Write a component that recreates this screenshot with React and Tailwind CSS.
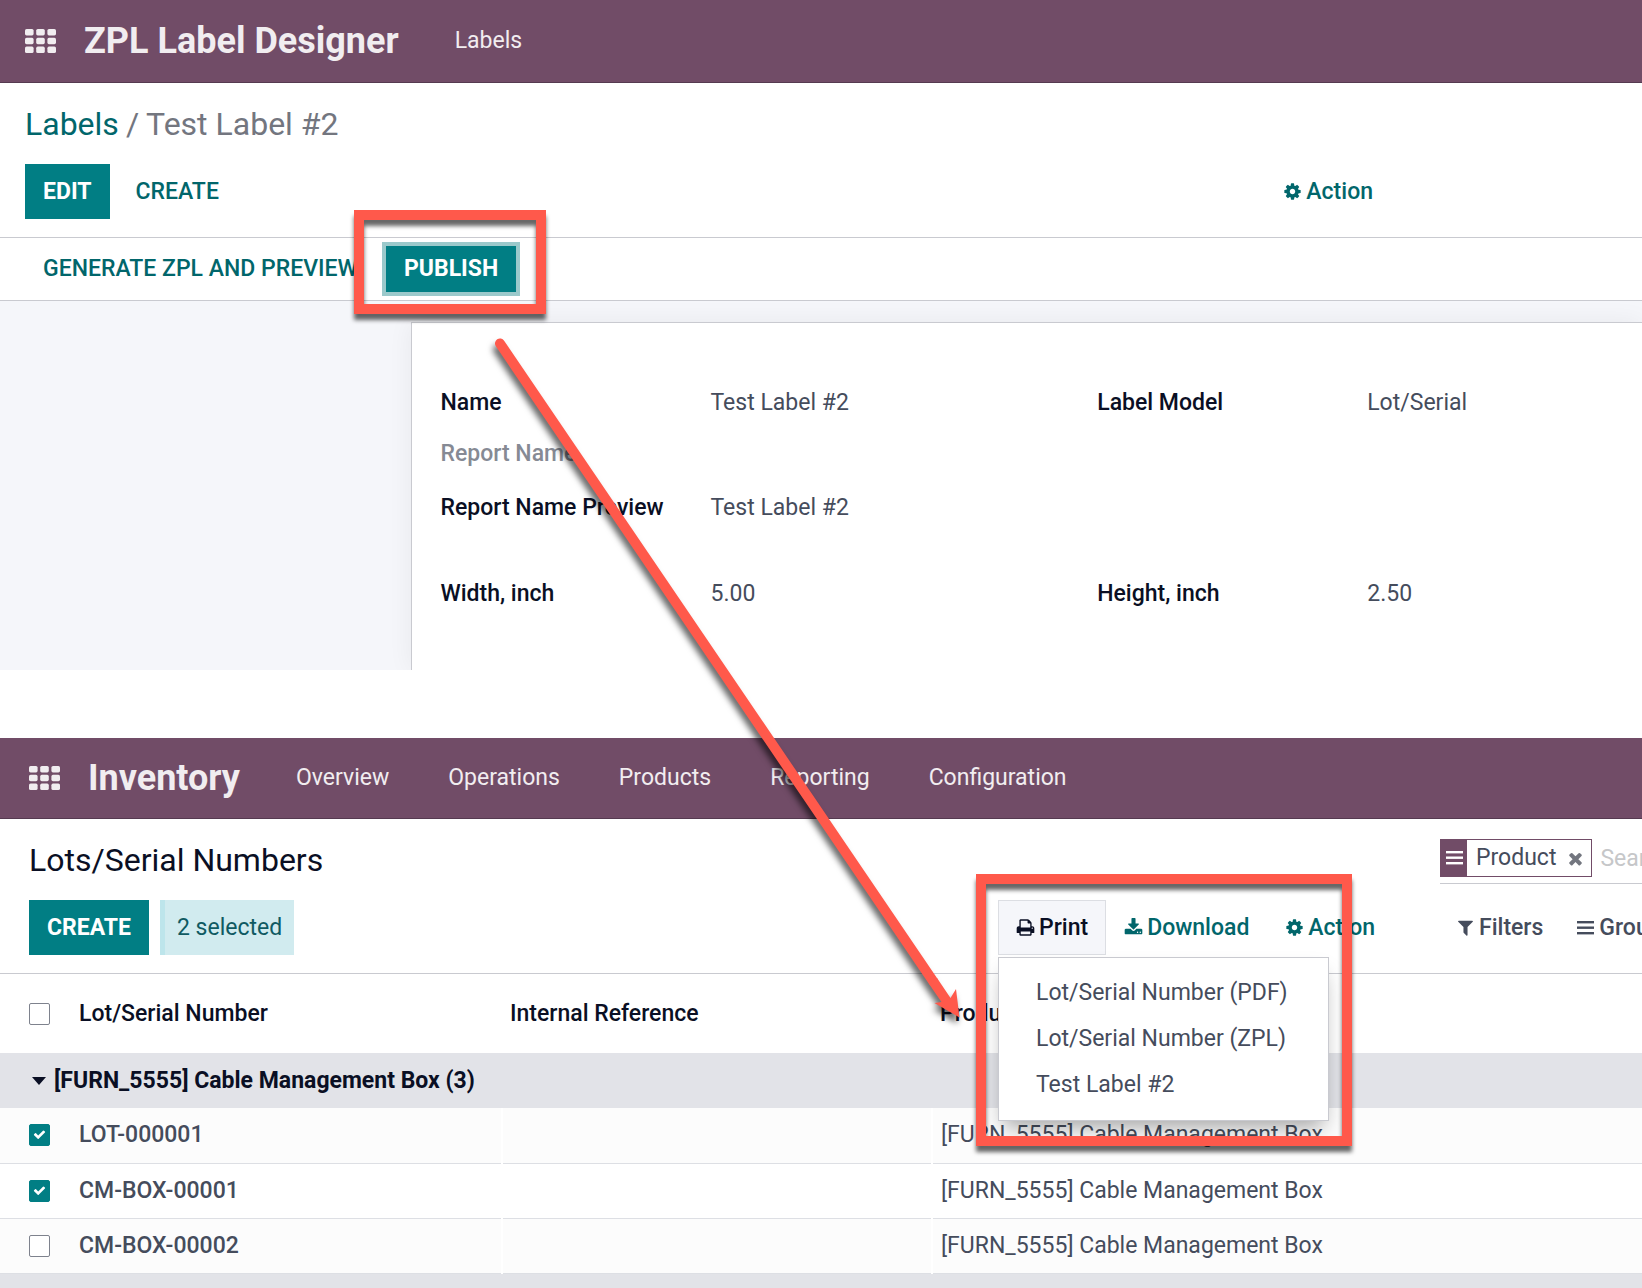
import React from "react";

const PATHS = {
  cog: "M1152 896q0-106-75-181t-181-75-181 75-75 181 75 181 181 75 181-75 75-181zm512-109v222q0 12-8 23t-20 13l-185 28q-19 54-39 91 35 50 107 138 10 12 10 25t-9 23q-27 37-99 108t-94 71q-12 0-26-9l-138-108q-44 23-91 38-16 136-29 186-7 28-36 28h-222q-14 0-24.5-8.5t-11.5-21.5l-28-184q-49-16-90-37l-141 107q-10 9-25 9-14 0-25-11-126-114-165-168-7-10-7-23 0-12 8-23 15-21 51-66.5t54-70.5q-27-50-41-99l-183-27q-13-2-21-12.5t-8-23.5v-222q0-12 8-23t19-13l186-28q14-46 39-92-40-57-107-138-10-12-10-24 0-10 9-23 26-36 98.5-107.5t94.5-71.5q13 0 26 10l138 107q44-23 91-38 16-136 29-186 7-28 36-28h222q14 0 24.5 8.5t11.5 21.5l28 184q49 16 90 37l142-107q9-9 24-9 13 0 25 10 129 119 165 170 7 8 7 22 0 12-8 23-15 21-51 66.5t-54 70.5q26 50 41 98l183 28q13 2 21 12.5t8 23.5z",
  print: "M448 1536h896v-256h-896v256zm0-640h896v-384h-160q-40 0-68-28t-28-68v-160h-640v640zm1152 64q0-26-19-45t-45-19-45 19-19 45 19 45 45 19 45-19 19-45zm128 0v416q0 13-9.500 22.500t-22.500 9.500h-224v160q0 40-28 68t-68 28h-960q-40 0-68-28t-28-68v-160h-224q-13 0-22.500-9.500t-9.500-22.500v-416q0-79 56.500-135.500t135.500-56.500h64v-544q0-40 28-68t68-28h672q40 0 88 20t76 48l152 152q28 28 48 76t20 88v256h64q79 0 135.500 56.500t56.500 135.500z",
  download: "M1344 1344q0-26-19-45t-45-19-45 19-19 45 19 45 45 19 45-19 19-45zm256 0q0-26-19-45t-45-19-45 19-19 45 19 45 45 19 45-19 19-45zm128-224v320q0 40-28 68t-68 28h-1472q-40 0-68-28t-28-68v-320q0-40 28-68t68-28h465l135 136q58 56 136 56t136-56l136-136h464q40 0 68 28t28 68zm-325-569q17 41-14 70l-448 448q-18 19-45 19t-45-19l-448-448q-31-29-14-70 17-39 59-39h256v-448q0-26 19-45t45-19h256q26 0 45 19t19 45v448h256q42 0 59 39z",
  filter: "M1595 295q17 41-14 70l-493 493v742q0 42-39 59-13 5-25 5-27 0-45-19l-256-256q-19-19-19-45v-486l-493-493q-31-29-14-70 17-39 59-39h1280q42 0 59 39z",
  times: "M1490 1322q0 40-28 68l-136 136q-28 28-68 28t-68-28l-294-294-294 294q-28 28-68 28t-68-28l-136-136q-28-28-28-68t28-68l294-294-294-294q-28-28-28-68t28-68l136-136q28-28 68-28t68 28l294 294 294-294q28-28 68-28t68 28l136 136q28 28 28 68t-28 68l-294 294 294 294q28 28 28 68z",
  check: "M1671 566q0 40-28 68l-724 724-136 136q-28 28-68 28t-68-28l-136-136-362-362q-28-28-28-68t28-68l136-136q28-28 68-28t68 28l294 295 656-657q28-28 68-28t68 28l136 136q28 28 28 68z",
};

function Icon({ name, className = "size-[19px]" }) {
  return (
    <svg viewBox="0 0 1792 1792" fill="currentColor" aria-hidden="true" className={`shrink-0 ${className}`}>
      <path d={PATHS[name]} />
    </svg>
  );
}

function Bars() {
  return (
    <svg viewBox="0 0 17 16" fill="currentColor" aria-hidden="true" className="h-4 w-[17px] shrink-0">
      <rect x="0" y="1" width="17" height="2.400" />
      <rect x="0" y="6.500" width="17" height="2.400" />
      <rect x="0" y="12" width="17" height="2.400" />
    </svg>
  );
}

function Waffle() {
  return (
    <button type="button" aria-label="Home menu" className="shrink-0">
      <svg viewBox="0 0 31 24" fill="currentColor" className="block h-6 w-[31px]" aria-hidden="true">
        {[0, 8.8, 17.6].map((y) =>
          [0, 11.2, 22.4].map((x) => <rect key={`${x}-${y}`} x={x} y={y} width="8.600" height="6.400" rx="1.600" />)
        )}
      </svg>
    </button>
  );
}

function Navbar({ title, items, className }) {
  return (
    <nav className={`flex items-center border-b border-[#553a50] bg-[#714c67] text-[#f1edf0] ${className}`}>
      <Waffle />
      <span className="mr-14 ml-7 whitespace-nowrap text-4xl font-bold">{title}</span>
      <div className="flex gap-[59px]">
        {items.map((i) => (
          <a key={i} href="#" className="whitespace-nowrap">{i}</a>
        ))}
      </div>
    </nav>
  );
}

function Highlight({ className }) {
  return (
    <div
      aria-hidden="true"
      className={`pointer-events-none absolute border-10 border-[#ff594b] drop-shadow-[0_6px_2px_rgba(0,0,0,0.6)] ${className}`}
    />
  );
}

function Field({ label, value, muted, className }) {
  return (
    <div className={`grid grid-cols-[270px_1fr] items-center ${className}`}>
      <dt className={`whitespace-nowrap font-medium ${muted ? "text-[#868a94]" : "text-[#0a0f24]"}`}>{label}</dt>
      <dd className="text-[#454c5c]">{value}</dd>
    </div>
  );
}

function Check({ label, checked }) {
  return (
    <span className="relative block h-[22px] w-[21px]">
      <input
        type="checkbox"
        aria-label={label}
        defaultChecked={checked}
        className="peer block h-[22px] w-[21px] appearance-none rounded-xs border border-[#7e828d] bg-white checked:border-[#017e84] checked:bg-[#017e84]"
      />
      <Icon name="check" className="pointer-events-none absolute top-1 left-1 hidden size-[13px] text-white peer-checked:block" />
    </span>
  );
}

const PRIMARY = "bg-[#017e84] px-[18px] font-bold text-white";
const PRODUCT = "[FURN_5555] Cable Management Box";
const LOTS = [
  { name: "LOT-000001", checked: true },
  { name: "CM-BOX-00001", checked: true },
  { name: "CM-BOX-00002", checked: false },
];

function Designer() {
  return (
    <section>
      <Navbar title="ZPL Label Designer" items={["Labels"]} className="h-[83px] pl-[25px]" />
      <header className="border-b border-[#c9cad0] px-[25px] pb-[18px]">
        <div className="flex h-[81px] items-center gap-[7px] text-[32px] text-[#73767f]">
          <a href="#" className="text-[#01666b]">Labels</a>
          <span>/</span>
          <span>Test Label #2</span>
        </div>
        <div className="flex h-[55px] items-stretch">
          <button type="button" className={PRIMARY}>EDIT</button>
          <button type="button" className="ml-2 px-[18px] font-medium text-[#01666b]">CREATE</button>
          <button type="button" className="mr-[244px] ml-auto flex items-center gap-1 font-medium text-[#01666b]">
            <Icon name="cog" />Action
          </button>
        </div>
      </header>
      <div className="flex h-[63px] items-center border-b border-[#c9cad0] pl-[43px]">
        <button type="button" className="w-[343px] whitespace-nowrap text-left font-medium text-[#01666b]">
          GENERATE ZPL AND PREVIEW
        </button>
        <div className="relative">
          <button type="button" className={`h-[46px] ring-4 ring-[#9bc9cb] ${PRIMARY}`}>PUBLISH</button>
          <Highlight className="-top-9 -right-[30px] -bottom-[22px] -left-8" />
        </div>
      </div>
      <div className="overflow-hidden bg-[#f5f6fa] pt-[21px] pl-[25%]">
        <dl className="grid grid-cols-[657fr_545fr] border-t border-l border-[#c9cad0] bg-white pt-[55px] pb-[51px] pl-[29px] shadow-[0_0_24px_rgba(0,0,0,0.06)]">
          <Field label="Name" value="Test Label #2" className="h-[50px]" />
          <Field label="Label Model" value="Lot/Serial" className="h-[50px]" />
          <Field label="Report Name" muted className="col-span-2 h-[52px]" />
          <Field label="Report Name Preview" value="Test Label #2" className="col-span-2 h-14" />
          <Field label="Width, inch" value="5.00" className="mt-8 h-[51px]" />
          <Field label="Height, inch" value="2.50" className="mt-8 h-[51px]" />
        </dl>
      </div>
    </section>
  );
}

function Inventory() {
  return (
    <section className="mt-[68px]">
      <Navbar
        title="Inventory"
        items={["Overview", "Operations", "Products", "Reporting", "Configuration"]}
        className="h-[81px] pl-[29px]"
      />
      <header className="grid grid-cols-[1fr_442px_202px] border-b border-[#c9cad0] pb-[18px]">
        <h1 className="col-span-2 flex h-[81px] items-center pl-[29px] text-[32px] text-[#0a0f24]">Lots/Serial Numbers</h1>
        <div className="mt-5 flex h-[45px] items-start overflow-hidden border-b border-[#c9cad0]">
          <div className="flex h-[38px] shrink-0 items-stretch border border-[#714c67]">
            <span className="flex w-[26px] items-center justify-center bg-[#714c67] text-white"><Bars /></span>
            <span className="self-center pl-[9px] text-[#454c5c]">Product</span>
            <button type="button" aria-label="Remove filter" className="pr-1.5 pl-2.5 text-[#73767f]"><Icon name="times" /></button>
          </div>
          <input
            type="search"
            aria-label="Search"
            placeholder="Search..."
            className="ml-2 h-[38px] w-60 shrink-0 outline-none placeholder:text-[#c6c7c9]"
          />
        </div>
        <div className="flex h-[55px] items-stretch gap-[11px] pl-[29px]">
          <button type="button" className={PRIMARY}>CREATE</button>
          <span className="flex items-center border-l-5 border-[#bde5eb] bg-[#d1ebef] px-3 text-[#0f5a62]">2 selected</span>
        </div>
        <div className="relative flex h-[55px] items-stretch font-medium text-[#01666b]">
          <button type="button" aria-expanded="true" className="flex items-center gap-1 border border-[#dcdee3] bg-[#f5f6fa] px-[17px] text-[#0a0f24]">
            <Icon name="print" />Print
          </button>
          <button type="button" className="flex items-center gap-1 px-[18px]"><Icon name="download" />Download</button>
          <button type="button" className="flex items-center gap-1 px-[18px]"><Icon name="cog" />Action</button>
          <ul className="absolute top-[57px] left-0 z-10 w-[331px] border border-[#c9cad0] bg-white py-3 font-normal text-[#454c5c] shadow-[0_12px_20px_-6px_rgba(0,0,0,0.35)]">
            {["Lot/Serial Number (PDF)", "Lot/Serial Number (ZPL)", "Test Label #2"].map((t) => (
              <li key={t}>
                <a href="#" className="flex h-[46px] items-center whitespace-nowrap pl-[37px]">{t}</a>
              </li>
            ))}
          </ul>
          <Highlight className="-top-[26px] -left-[22px] z-20 h-[272px] w-[376px]" />
        </div>
        <div className="flex items-center gap-[34px] overflow-hidden pl-4 font-medium text-[#454c5c]">
          <button type="button" className="flex items-center gap-1"><Icon name="filter" />Filters</button>
          <button type="button" className="flex items-center gap-[5px] whitespace-nowrap"><Bars />Group By</button>
        </div>
      </header>
      <table className="w-full table-fixed border-collapse text-left">
        <colgroup>
          <col className="w-[71px]" />
          <col className="w-[431px]" />
          <col className="w-[430px]" />
          <col />
        </colgroup>
        <thead>
          <tr className="h-[79px] text-[#0a0f24]">
            <th className="pl-[29px]"><Check label="Select all" /></th>
            <th className="pl-2 font-medium">Lot/Serial Number</th>
            <th className="pl-2 font-medium">Internal Reference</th>
            <th className="pl-2 font-medium">Product</th>
          </tr>
        </thead>
        <tbody>
          <tr className="h-[55px] bg-[#e2e3e8] text-[#0a0f24]">
            <th colSpan={4} className="pl-8 font-bold">
              <button type="button" className="flex items-center gap-2">
                <svg viewBox="0 0 14 8" className="h-2 w-3.5" fill="currentColor" aria-hidden="true"><path d="M0 0h14L7 8z" /></svg>
                {PRODUCT} (3)
              </button>
            </th>
          </tr>
          {LOTS.map((l) => (
            <tr key={l.name} className="h-[55px] border-b border-[#dddfe4] text-[#454c5c] odd:bg-white even:bg-[#fcfcfc]">
              <td className="pl-[29px]"><Check label={l.name} checked={l.checked} /></td>
              <td className="pl-2 font-medium">{l.name}</td>
              <td className="border-x-2 border-white"></td>
              <td className="pl-2">{PRODUCT}</td>
            </tr>
          ))}
          <tr className="h-4 bg-[#e2e3e8]"><td colSpan={4}></td></tr>
        </tbody>
      </table>
    </section>
  );
}

export default function App() {
  return (
    <main className="relative overflow-hidden bg-white font-[Roboto,sans-serif] text-[23px] leading-8">
      <Designer />
      <Inventory />
      <svg
        viewBox="0 0 500 710"
        aria-hidden="true"
        className="pointer-events-none absolute top-[330px] left-[480px] h-[710px] w-[500px] drop-shadow-[-2px_6px_3px_rgba(0,0,0,0.6)]"
      >
        <path d="M20 13.500L453 651" fill="none" stroke="#ff594b" strokeWidth="10" strokeLinecap="round" />
        <path d="M479.500 687.500L476 659L470.500 668L457.200 648.200L448.900 653.800L461.500 672L454.500 673Z" fill="#ff594b" />
      </svg>
    </main>
  );
}
